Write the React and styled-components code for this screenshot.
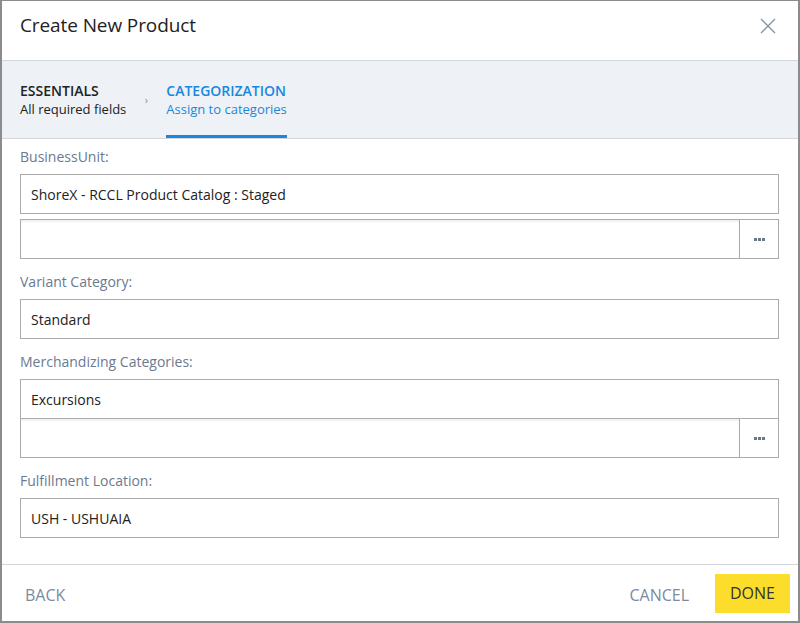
import styled, { createGlobalStyle } from 'styled-components';

const GlobalStyle = createGlobalStyle`
  html, body {
    margin: 0;
    padding: 0;
    background: #ffffff;
  }
  body {
    font-family: 'Open Sans', 'Liberation Sans', sans-serif;
  }
`;

const Dialog = styled.div`
  width: 800px;
  height: 623px;
  box-sizing: border-box;
  border: 2px solid #8c8c8c;
  border-top-width: 1px;
  display: flex;
  flex-direction: column;
  background: #fff;
  overflow: hidden;
`;

const Header = styled.div`
  height: 60px;
  box-sizing: border-box;
  border-bottom: 1px solid #d3d6da;
  display: flex;
  align-items: center;
  justify-content: space-between;
  padding: 0 20px 11px 18px;
`;

const Title = styled.h1`
  margin: 0;
  font-size: 19px;
  font-weight: 400;
  color: #222;
  letter-spacing: -0.1px;
`;

const CloseButton = styled.button`
  border: none;
  background: none;
  padding: 0;
  margin-top: 2px;
  width: 20px;
  height: 20px;
  cursor: pointer;
  display: flex;
  align-items: center;
  justify-content: center;
`;

const Stepper = styled.div`
  height: 77px;
  background: #eef1f5;
  border-bottom: 1px solid #d3d6da;
  display: flex;
  align-items: stretch;
  padding-left: 18px;
`;

const Step = styled.div`
  display: flex;
  flex-direction: column;
  justify-content: center;
  padding-top: 3px;
  box-sizing: border-box;
  border-bottom: 3px solid ${(p) => (p.active ? '#1a87de' : 'transparent')};
  color: ${(p) => (p.active ? '#1a87de' : '#222')};
  line-height: 19px;
`;

const StepTitle = styled.span`
  font-size: 14px;
  font-weight: 600;
`;

const StepSub = styled.span`
  font-size: 13px;
`;

const Chevron = styled.div`
  width: 40px;
  display: flex;
  align-items: center;
  justify-content: center;
  color: #8a94a2;
  font-size: 11px;
`;

const Body = styled.div`
  flex: 1;
  padding: 8px 19px 0 18px;
`;

const Field = styled.div`
  margin-bottom: 13px;
`;

const Label = styled.div`
  font-size: 14px;
  line-height: 20px;
  color: #6b7a8f;
  margin-bottom: 7px;
`;

const Input = styled.div`
  height: 38px;
  border: 1px solid #ababab;
  display: flex;
  align-items: center;
  padding: 0 10px;
  font-size: 14px;
  color: #222;
`;

const LookupRow = styled.div`
  display: flex;
  height: 38px;
  border: 1px solid #ababab;
  margin-top: ${(p) => (p.attached ? '-1px' : '5px')};
`;

const LookupInput = styled.div`
  flex: 1;
  box-shadow: inset 0 2px 2px rgba(0, 0, 0, 0.06);
`;

const LookupButton = styled.button`
  width: 39px;
  border: none;
  border-left: 1px solid #ababab;
  background: #fff;
  padding: 0;
  display: flex;
  align-items: center;
  justify-content: center;
  gap: 1px;
  cursor: pointer;
`;

const Dot = styled.span`
  width: 3px;
  height: 3px;
  background: #6a7888;
`;

const Footer = styled.div`
  height: 56px;
  border-top: 1px solid #d3d6da;
  display: flex;
  align-items: center;
  padding: 0 8px 0 21px;
`;

const TextButton = styled.button`
  border: none;
  background: none;
  font-family: inherit;
  font-size: 16px;
  color: #7b8a9f;
  padding: 3px 2px 0;
  cursor: pointer;
`;

const Spacer = styled.div`
  flex: 1;
`;

const DoneButton = styled.button`
  margin-left: 24px;
  width: 75px;
  height: 39px;
  border: none;
  background: #fddd2b;
  color: #333;
  font-family: inherit;
  font-size: 16px;
  padding-top: 1px;
  cursor: pointer;
`;

const Lookup = ({ attached }) => (
  <LookupRow attached={attached}>
    <LookupInput />
    <LookupButton>
      <Dot />
      <Dot />
      <Dot />
    </LookupButton>
  </LookupRow>
);

const App = () => (
  <>
    <GlobalStyle />
    <Dialog>
      <Header>
        <Title>Create New Product</Title>
        <CloseButton>
          <svg width="16" height="16" viewBox="0 0 16 16">
            <path d="M1 1L15 15M15 1L1 15" stroke="#8592a3" strokeWidth="1.3" />
          </svg>
        </CloseButton>
      </Header>
      <Stepper>
        <Step>
          <StepTitle>ESSENTIALS</StepTitle>
          <StepSub>All required fields</StepSub>
        </Step>
        <Chevron>›</Chevron>
        <Step active>
          <StepTitle>CATEGORIZATION</StepTitle>
          <StepSub>Assign to categories</StepSub>
        </Step>
      </Stepper>
      <Body>
        <Field>
          <Label>BusinessUnit:</Label>
          <Input>ShoreX - RCCL Product Catalog : Staged</Input>
          <Lookup />
        </Field>
        <Field>
          <Label>Variant Category:</Label>
          <Input>Standard</Input>
        </Field>
        <Field>
          <Label>Merchandizing Categories:</Label>
          <Input>Excursions</Input>
          <Lookup attached />
        </Field>
        <Field>
          <Label>Fulfillment Location:</Label>
          <Input>USH - USHUAIA</Input>
        </Field>
      </Body>
      <Footer>
        <TextButton>BACK</TextButton>
        <Spacer />
        <TextButton>CANCEL</TextButton>
        <DoneButton>DONE</DoneButton>
      </Footer>
    </Dialog>
  </>
);

export default App;
